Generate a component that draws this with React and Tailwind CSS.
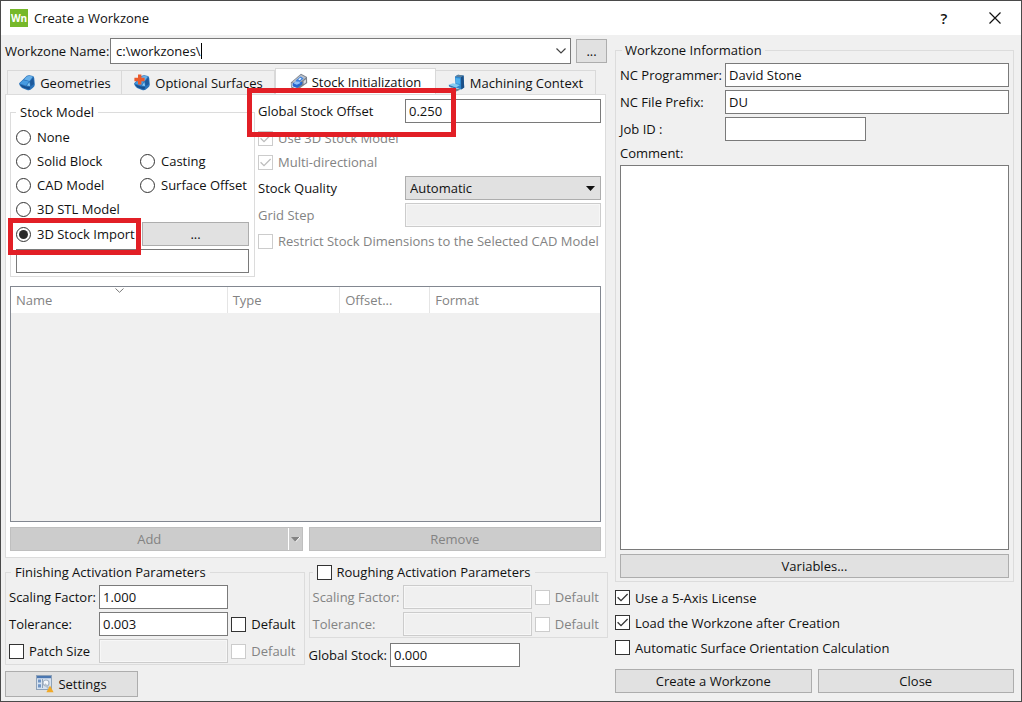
import React from "react";

const boxBase =
  "h-6 min-w-0 w-full border px-[3px] text-[13px] leading-5 outline-none";
const boxOn = "border-[#7a7a7a] bg-white text-[#111]";
const boxOff = "border-[#cccccc] bg-[#f0f0f0] text-[#838383] shadow-[inset_0_0_0_1px_#f7f7f7]";

function TextBox({ className = "", disabled, ...rest }) {
  return (
    <input
      type="text"
      disabled={disabled}
      className={`${boxBase} ${disabled ? boxOff : boxOn} ${className}`}
      {...rest}
    />
  );
}

function Check({ label, disabled, checked, className = "" }) {
  return (
    <label
      className={`flex items-center gap-[5px] whitespace-nowrap ${disabled ? "text-[#838383]" : ""} ${className}`}
    >
      <span className="grid shrink-0 place-items-center">
        <input
          type="checkbox"
          disabled={disabled}
          defaultChecked={checked}
          className="peer col-start-1 row-start-1 size-[15px] appearance-none border border-[#333] bg-white disabled:border-[#cccccc]"
        />
        <svg
          viewBox="0 0 15 15"
          className="pointer-events-none invisible col-start-1 row-start-1 size-[15px] text-[#333] peer-checked:visible peer-disabled:text-[#bdbdbd]"
        >
          <path d="M2.6 7.3 L6 10.7 L12.6 4" fill="none" stroke="currentColor" strokeWidth="1.3" />
        </svg>
      </span>
      {label}
    </label>
  );
}

function Radio({ label, checked }) {
  return (
    <label className="flex items-center gap-1.5 whitespace-nowrap">
      <span className="grid shrink-0 place-items-center">
        <input
          type="radio"
          name="stock-model"
          defaultChecked={checked}
          className="peer col-start-1 row-start-1 size-[15px] appearance-none rounded-full border border-[#333] bg-white"
        />
        <span className="pointer-events-none invisible col-start-1 row-start-1 size-[9px] rounded-full bg-[#2b2b2b] peer-checked:visible" />
      </span>
      {label}
    </label>
  );
}

function Button({ className = "", children, ...rest }) {
  return (
    <button
      type="button"
      className={`flex h-6 items-center justify-center border border-[#adadad] bg-[#e1e1e1] ${className}`}
      {...rest}
    >
      {children}
    </button>
  );
}

function Gem({ plus }) {
  return (
    <svg viewBox="0 0 18 18" className="size-[18px] shrink-0">
      <path d="M1 9.8 Q1.4 8.4 3.5 7 L8.8 1.8 Q10 1 11.5 1.3 L15 2 Q16 2.4 16.2 4 L16.8 10.5 Q16.8 12.5 15 13.8 L12.5 15.8 Q11 16.6 9 16 L4 14 Q2 13 1 9.8 Z" fill="#2b74bb" />
      <path d="M8.8 2.6 Q10 1.6 12 2 L15 2.6 L11.5 7 L6 5.6 Z" fill="#69b1ea" />
      <path d="M1.6 9.4 L5.4 6.2 L11 7.6 L8 11.6 Z" fill="#479be0" />
      <path d="M12 7.4 L15.3 3.4 L16 10 L12.6 12.2 Z" fill="#1e5a9c" />
      <path d="M2 10.4 L8 12.4 L12.2 13 L11.4 15.4 L4.6 13.6 Z" fill="#18508e" />
      <path d="M8.9 11.6 L11.4 8.2 L12 12 Z" fill="#8accf6" />
      {plus && <path d="M5 0.6 h3.4 v3.2 h3.2 v3.4 h-3.2 v3.4 h-3.4 v-3.4 h-3.6 v-3.4 h3.6 Z" fill="#ea5a2c" />}
    </svg>
  );
}

function StockIcon() {
  return (
    <svg viewBox="0 0 18 18" className="size-[18px] shrink-0">
      <path d="M0.8 9.4 L11 0.8 L17 4 L17.2 10 L7.4 17 L1 14.6 Z" fill="#7b818c" />
      <path d="M2 9.2 L11 1.8 L16 4.4 L7.4 11.4 Z" fill="#b9c0ca" />
      <path d="M1.6 10 L7.2 12 L7.2 16 L1.8 13.8 Z" fill="#e4ecf6" />
      <path d="M5.6 7.4 L10.6 3.6 L13.6 5.6 L8.4 9.8 Z" fill="#3c82e0" />
      <path d="M2.6 10.6 L6.2 8.2 L12.4 9 L12 11.4 L7 15 L2.6 13.2 Z" fill="#2566cf" />
      <path d="M5 8.6 L9 8.4 L10.6 10 L6.8 11.8 L3.8 10.6 Z" fill="#8fc0fa" />
      <path d="M8.2 6.2 L10.4 4.8 L11.6 5.8 L9.6 7.2 Z" fill="#e8f3ff" />
      <path d="M13.6 8 L16 6.2 L16 9.6 L13.6 11.2 Z" fill="#d3d8df" />
    </svg>
  );
}

function MachineIcon() {
  return (
    <svg viewBox="0 0 18 18" className="size-[18px] shrink-0">
      <path d="M7 2.6 L10 0.8 L15.6 1.4 L16.2 13.4 L13.2 15.6 L7.6 13.5 Z" fill="#2d86cf" />
      <path d="M7 2.6 L10 0.8 L15.6 1.4 L13 3.2 Z" fill="#5f7f9a" />
      <path d="M13 3.2 L15.6 1.4 L16.2 13.4 L13.2 15.6 Z" fill="#1b4f86" />
      <path d="M7.6 4 L12 4.6 L12.2 10 L8 9.6 Z" fill="#4eb0ec" />
      <path d="M0.8 10.8 L5 9.2 L12 11 L8 13.4 Z" fill="#83ccf2" />
      <path d="M0.8 10.8 L8 13.4 L8 14.8 L1 12.4 Z" fill="#2b74b4" />
      <path d="M2.6 13.2 L12.8 15.6 L8 17.4 L2.8 15.6 Z" fill="#71808d" />
    </svg>
  );
}

function SettingsIcon() {
  return (
    <svg viewBox="0 0 18 18" className="size-[18px] shrink-0">
      <rect x="0.5" y="0.5" width="15" height="14" fill="#d6e2f0" stroke="#8fa2b8" />
      <rect x="1" y="1" width="14" height="2.2" fill="#4a76b0" />
      <path d="M2 4.6 h3 v3 h-3 Z M2 9.2 h3 v3.4 h-3 Z" fill="#6f94c4" />
      <path d="M6 4 h1 v9 h-1 Z" fill="#8fa2b8" />
      <circle cx="10" cy="8" r="3" fill="#f6f8fb" stroke="#a3b1c2" strokeWidth="1.2" />
      <path d="M8.8 9 L12.6 13.4" stroke="#b3bfcc" strokeWidth="2" />
      <path d="M14 10.6 L17.6 17.2 H10.4 Z" fill="#f0a928" />
    </svg>
  );
}

const tabs = [
  { label: "Geometries", icon: <Gem />, size: "w-[115px]" },
  { label: "Optional Surfaces", icon: <Gem plus />, size: "w-[153px]" },
  { label: "Stock Initialization", icon: <StockIcon />, size: "w-[161px]", active: true },
  { label: "Machining Context", icon: <MachineIcon />, size: "w-[160px]" },
];

function TabStrip() {
  return (
    <div role="tablist" className="flex h-[26px] items-end pl-0.5">
      {tabs.map((t) => (
        <button
          key={t.label}
          type="button"
          role="tab"
          aria-selected={!!t.active}
          className={`flex items-center justify-center gap-1 whitespace-nowrap border border-b-0 border-[#d9d9d9] ${t.size} ${
            t.active ? "h-[26px] bg-white" : "h-6 bg-[#f0f0f0] not-first:border-l-0"
          }`}
        >
          {t.icon}
          {t.label}
        </button>
      ))}
    </div>
  );
}

function StockModel() {
  return (
    <fieldset className="min-w-0 border border-[#dcdcdc] px-[5px] pb-[3px]">
      <legend className="px-1 leading-5">Stock Model</legend>
      <div className="grid grid-cols-[124px_1fr] auto-rows-[24px] items-center pt-[3px]">
        <div className="col-span-2"><Radio label="None" /></div>
        <Radio label="Solid Block" />
        <Radio label="Casting" />
        <Radio label="CAD Model" />
        <Radio label="Surface Offset" />
        <div className="col-span-2"><Radio label="3D STL Model" /></div>
      </div>
      <div className="relative mt-px flex items-center">
        <div className="w-[126px] shrink-0"><Radio label="3D Stock Import" checked /></div>
        <Button className="flex-1" aria-label="Browse stock file">...</Button>
        <div className="pointer-events-none absolute -top-1 -left-2 h-[37px] w-[133px] border-[5px] border-[#e21f26]" />
      </div>
      <TextBox className="mt-[3px]" aria-label="Stock file" />
    </fieldset>
  );
}

function StockOptions() {
  return (
    <div className="min-w-0">
      <div className="relative grid grid-cols-[147px_1fr] items-center">
        <label htmlFor="offset">Global Stock Offset</label>
        <TextBox id="offset" defaultValue="0.250" />
        <div className="pointer-events-none absolute -top-[11px] -left-[11px] z-10 h-[49px] w-[209px] border-[5px] border-[#e21f26]" />
      </div>
      <Check label="Use 3D Stock Model" disabled checked className="mt-[3px] h-6" />
      <Check label="Multi-directional" disabled checked className="h-6" />
      <div className="mt-0.5 grid grid-cols-[147px_1fr] items-center gap-y-[3px]">
        <label htmlFor="quality">Stock Quality</label>
        <div className="grid items-center">
          <select
            id="quality"
            className="col-start-1 row-start-1 h-6 w-full appearance-none border border-[#adadad] bg-[#e1e1e1] px-1 text-[13px] leading-5 outline-none"
          >
            <option>Automatic</option>
          </select>
          <svg viewBox="0 0 9 5" className="pointer-events-none col-start-1 row-start-1 mr-1.5 h-[5px] w-[9px] justify-self-end">
            <path d="M0 0 H9 L4.5 5 Z" fill="#111" />
          </svg>
        </div>
        <label htmlFor="grid" className="text-[#838383]">Grid Step</label>
        <TextBox id="grid" disabled />
      </div>
      <Check label="Restrict Stock Dimensions to the Selected CAD Model" disabled className="mt-0.5 h-6" />
    </div>
  );
}

function StockTable() {
  return (
    <div className="mt-[9px] flex-1 border border-[#828790] bg-[#f0f0f0]">
      <table className="w-full table-fixed border-collapse text-left text-[#838383]">
        <thead className="bg-white">
          <tr className="h-[26px]">
            <th className="relative w-[36.7%] border-r border-[#e5e5e5] px-[5px] font-normal">
              Name
              <svg viewBox="0 0 9 5" className="absolute top-px left-[48%] h-[5px] w-[9px]">
                <path d="M0.5 0.5 L4.5 4.3 L8.5 0.5" fill="none" stroke="#777" />
              </svg>
            </th>
            <th className="w-[19.1%] border-r border-[#e5e5e5] px-[5px] font-normal">Type</th>
            <th className="w-[15.3%] border-r border-[#e5e5e5] px-[5px] font-normal">Offset...</th>
            <th className="px-[5px] font-normal">Format</th>
          </tr>
        </thead>
      </table>
    </div>
  );
}

function Finishing() {
  return (
    <fieldset className="min-w-0 border border-[#dcdcdc] pr-2 pb-px pl-[3px]">
      <legend className="ml-0.5 px-1 leading-5">Finishing Activation Parameters</legend>
      <div className="grid grid-cols-[87px_1fr_auto] items-center gap-x-[3px] gap-y-[3px] pt-[3px]">
        <label htmlFor="f-scale" className="whitespace-nowrap">Scaling Factor:</label>
        <TextBox id="f-scale" defaultValue="1.000" />
        <span />
        <label htmlFor="f-tol">Tolerance:</label>
        <TextBox id="f-tol" defaultValue="0.003" />
        <Check label="Default" />
        <Check label="Patch Size" />
        <TextBox disabled aria-label="Patch Size value" />
        <Check label="Default" disabled />
      </div>
    </fieldset>
  );
}

function Roughing() {
  return (
    <div className="min-w-0">
      <fieldset className="min-w-0 border border-[#dcdcdc] pr-2 pb-px pl-[3px]">
        <legend className="px-1 leading-5"><Check label="Roughing Activation Parameters" /></legend>
        <div className="grid grid-cols-[87px_1fr_auto] items-center gap-x-[3px] gap-y-[3px] pt-[3px] text-[#838383]">
          <label htmlFor="r-scale" className="whitespace-nowrap">Scaling Factor:</label>
          <TextBox id="r-scale" disabled />
          <Check label="Default" disabled />
          <label htmlFor="r-tol">Tolerance:</label>
          <TextBox id="r-tol" disabled />
          <Check label="Default" disabled />
        </div>
      </fieldset>
      <div className="mt-[5px] flex items-center gap-[3px]">
        <label htmlFor="g-stock" className="whitespace-nowrap">Global Stock:</label>
        <div className="w-[130px]"><TextBox id="g-stock" defaultValue="0.000" /></div>
      </div>
    </div>
  );
}

function InfoPanel() {
  return (
    <fieldset className="flex min-h-0 flex-1 flex-col border border-[#dcdcdc] px-1 pb-[3px]">
      <legend className="ml-0.5 px-[3px] leading-5">Workzone Information</legend>
      <div className="flex h-full flex-col pt-[3px]">
        <div className="grid grid-cols-[105px_1fr] items-center gap-y-[3px]">
          <label htmlFor="prog" className="whitespace-nowrap">NC Programmer:</label>
          <TextBox id="prog" defaultValue="David Stone" />
          <label htmlFor="prefix">NC File Prefix:</label>
          <TextBox id="prefix" defaultValue="DU" />
          <label htmlFor="job">Job ID :</label>
          <div className="w-[141px]"><TextBox id="job" /></div>
        </div>
        <label htmlFor="comment" className="py-0.5">Comment:</label>
        <textarea id="comment" className="w-full flex-1 resize-none border border-[#7a7a7a] bg-white p-1 outline-none" />
        <Button className="mt-1">Variables...</Button>
      </div>
    </fieldset>
  );
}

export default function App() {
  return (
    <div className="flex min-h-screen flex-col border border-[#4a4a4a] bg-[#f0f0f0] font-['Open_Sans','Noto_Sans',sans-serif] text-[13px] leading-5 text-[#111]">
      <header className="flex h-[34px] items-center bg-white pl-[9px]">
        <div className="flex size-[18px] items-center justify-center bg-[#76b82a] text-[10px] font-bold text-white">Wn</div>
        <h1 className="ml-1.5 flex-1">Create a Workzone</h1>
        <button type="button" aria-label="Help" className="w-[50px] text-[15px] font-semibold">?</button>
        <button type="button" aria-label="Close window" className="flex w-[52px] justify-center">
          <svg viewBox="0 0 12 12" className="size-3">
            <path d="M0.5 0.5 L11.5 11.5 M11.5 0.5 L0.5 11.5" stroke="#111" strokeWidth="1.2" />
          </svg>
        </button>
      </header>

      <main className="grid flex-1 grid-cols-[3fr_2fr]">
        <section className="flex min-w-0 flex-col pr-[5px] pb-1 pl-1">
          <div className="flex items-center pt-[3px]">
            <label htmlFor="zone" className="w-[105px] shrink-0 whitespace-nowrap">Workzone Name:</label>
            <div className="relative flex h-[26px] flex-1 items-center border border-[#7a7a7a] bg-white">
              <input
                id="zone"
                type="text"
                defaultValue="c:\workzones\"
                className="min-w-0 flex-1 bg-transparent pl-[5px] text-[13px] leading-5 outline-none"
              />
              <span className="absolute left-[90px] h-4 w-px bg-black" />
              <button type="button" aria-label="Show recent names" className="flex w-[18px] justify-center">
                <svg viewBox="0 0 10 6" className="h-1.5 w-2.5">
                  <path d="M0.5 0.5 L5 5 L9.5 0.5" fill="none" stroke="#444" strokeWidth="1.2" />
                </svg>
              </button>
            </div>
            <Button className="mr-px ml-[5px] w-[31px]" aria-label="Browse folder">...</Button>
          </div>

          <div className="mt-1"><TabStrip /></div>
          <div className="mr-0.5 flex flex-1 flex-col border border-[#dcdcdc] bg-white px-1 pt-1 pb-1.5">
            <div className="grid grid-cols-[245px_1fr] gap-x-[3px]">
              <div className="pt-[3px]"><StockModel /></div>
              <StockOptions />
            </div>
            <StockTable />
            <div className="mt-[5px] grid grid-cols-2 gap-1.5 text-[#838383]">
              <div className="flex h-6 border border-[#bfbfbf] bg-[#cccccc]">
                <button type="button" disabled className="flex-1">Add</button>
                <button type="button" disabled aria-label="More add options" className="flex w-[14px] items-center justify-center border-l border-white">
                  <svg viewBox="0 0 9 5" className="h-[5px] w-[9px]">
                    <path d="M0 0 H9 L4.5 5 Z" fill="#838383" />
                    <path d="M9 0 L4.5 5" stroke="#fff" />
                  </svg>
                </button>
              </div>
              <button type="button" disabled className="h-6 border border-[#bfbfbf] bg-[#cccccc]">Remove</button>
            </div>
          </div>

          <div className="mt-1 grid grid-cols-2 items-start gap-1">
            <Finishing />
            <Roughing />
          </div>
          <Button className="mt-1 h-[26px] w-[133px] gap-1">
            <SettingsIcon />
            Settings
          </Button>
        </section>

        <section className="flex min-w-0 flex-col pt-[5px] pr-[7px] pb-2 pl-0.5">
          <InfoPanel />
          <div className="mt-[3px] flex flex-col">
            <Check label="Use a 5-Axis License" checked className="h-[25px]" />
            <Check label="Load the Workzone after Creation" checked className="h-[25px]" />
            <Check label="Automatic Surface Orientation Calculation" className="h-[25px]" />
          </div>
          <div className="mt-[9px] grid grid-cols-2 gap-1.5">
            <Button>Create a Workzone</Button>
            <Button>Close</Button>
          </div>
        </section>
      </main>
    </div>
  );
}
